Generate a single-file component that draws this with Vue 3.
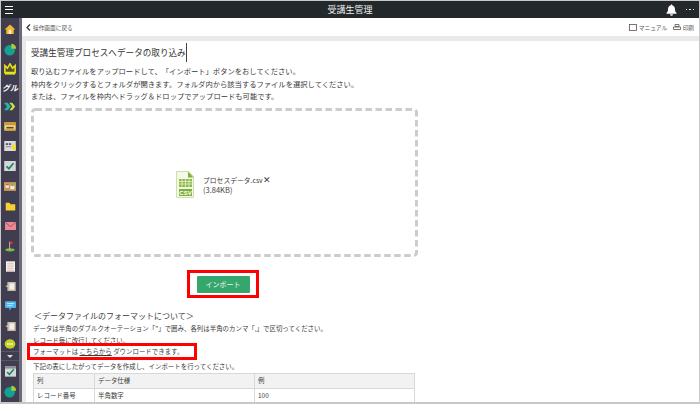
<script setup>
const lines = [
  '取り込むファイルをアップロードして、「インポート」ボタンをおしてください。',
  '枠内をクリックするとフォルダが開きます。フォルダ内から該当するファイルを選択してください。',
  'または、ファイルを枠内へドラッグ＆ドロップでアップロードも可能です。'
]
const rows = [
  { col: '列', spec: 'データ仕様', ex: '例', head: true },
  { col: 'レコード番号', spec: '半角数字', ex: '100', head: false }
]
</script>

<template>
  <div class="screen">
    <header class="topbar">
      <div class="burger"><i></i><i></i><i></i></div>
      <div class="app-title">受講生管理</div>
      <div class="top-actions">
        <svg width="11" height="12" viewBox="0 0 11 12"><path d="M5.5 0.5c.7 0 1 .5 1 1C8.300 2 9 3.500 9 5.500c0 1.500.5 2.500 1.500 3.500v.8H.5V9C1.500 8 2 7 2 5.500 2 3.500 2.700 2 4.500 1.500c0-.5.3-1 1-1z" fill="#fff"/><path d="M4 10.300h3a1.500 1.500 0 0 1-3 0z" fill="#fff"/></svg>
        <span class="dots"><i></i><i></i><i></i></span>
      </div>
    </header>

    <div class="body">
      <nav class="sidebar">
        <div class="slot"><svg width="12" height="10" viewBox="0 0 14 12"><path d="M7 .5L.5 6.500h2V12h9V6.500h2z" fill="#f2b632"/><path d="M5.500 7h3v5h-3z" fill="#fff3c4"/></svg></div>
        <div class="slot"><svg width="13" height="13" viewBox="0 0 16 16"><circle cx="7" cy="9" r="6.500" fill="#12a192"/><path d="M9 1a6 6 0 0 1 6 6H9z" fill="#a9cb3a"/></svg></div>
        <div class="slot"><svg width="12" height="12" viewBox="0 0 14 14"><path d="M1 3l3 3 3-5 3 5 3-3v8H1z" fill="#55532f" stroke="#e8e21e" stroke-width="1.800"/><path d="M1 12.500h12" stroke="#e8e21e" stroke-width="2"/></svg></div>
        <div class="slot gl-slot"><span class="gl">グル</span></div>
        <div class="slot"><svg width="12" height="9" viewBox="0 0 16 10"><path d="M0 0h5l4 5-4 5H0l4-5z" fill="#25b6a6"/><path d="M7 0h4l4 5-4 5H7l4-5z" fill="#c8e04a"/></svg></div>
        <div class="slot"><svg width="12" height="9" viewBox="0 0 15 11"><rect width="15" height="11" rx="1" fill="#c79a3b"/><rect y="4" x="1" width="13" height="5" fill="#f2d98a"/><rect x="3" y="6" width="9" height="2" fill="#5b4a2a"/></svg></div>
        <div class="slot"><svg width="12" height="10" viewBox="0 0 15 13"><rect width="15" height="13" fill="#d9d9e0"/><rect x="2" y="3" width="3" height="2" fill="#444"/><rect x="6" y="3" width="3" height="2" fill="#444"/><rect x="2" y="7" width="7" height="1" fill="#777"/><rect x="10" y="5" width="5" height="6" fill="#f4e21e"/></svg></div>
        <div class="slot"><svg width="12" height="10" viewBox="0 0 15 13"><rect width="15" height="13" fill="#d5d6dc"/><path d="M3 7l3 3 6-7" fill="none" stroke="#128a4a" stroke-width="2.200"/></svg></div>
        <div class="slot"><svg width="12" height="9" viewBox="0 0 15 11"><rect width="15" height="11" fill="#c49a5c"/><rect x="2" y="2" width="4" height="5" fill="#f3eee4"/><rect x="2" y="2" width="4" height="2" fill="#d9534f"/><rect x="8" y="4" width="5" height="5" fill="#f3eee4"/><rect x="9" y="3" width="3" height="2" fill="#5cb85c"/></svg></div>
        <div class="slot"><svg width="11" height="9" viewBox="0 0 15 12"><path d="M1 1h5l1.500 2H14v8.500H1z" fill="#f5d230"/></svg></div>
        <div class="slot"><svg width="11" height="8" viewBox="0 0 15 11"><rect width="15" height="11" fill="#e98b95"/><path d="M.5.500l7 6 7-6" fill="none" stroke="#8e3d4d" stroke-width="1"/></svg></div>
        <div class="slot"><svg width="10" height="12" viewBox="0 0 13 15"><ellipse cx="6.500" cy="12.500" rx="6" ry="2" fill="#7eb84a"/><path d="M6 2v10" stroke="#d8d8d8" stroke-width="1"/><path d="M6.500 1l5 2.500-5 2.500z" fill="#ee2b24"/></svg></div>
        <div class="slot"><svg width="9" height="11" viewBox="0 0 13 15"><rect width="13" height="15" fill="#f4f1ec"/><path d="M2 3h9M2 5.500h9M2 8h9M2 10.500h9M2 13h9" stroke="#d9a08f" stroke-width=".8"/></svg></div>
        <div class="slot"><svg width="11" height="9" viewBox="0 0 15 13"><rect x="3" width="12" height="13" fill="#c8bda2"/><rect x="6" y="2" width="7" height="9" fill="#efefef"/><path d="M0 6l4-2v4z" fill="#c8bda2"/></svg></div>
        <div class="slot"><svg width="11" height="10" viewBox="0 0 16 14"><path d="M1.500 0h13A1.500 1.500 0 0 1 16 1.500v7A1.500 1.500 0 0 1 14.500 10H9l-2 4-1-4H1.500A1.500 1.500 0 0 1 0 8.500v-7A1.500 1.500 0 0 1 1.500 0z" fill="#4cb4ee"/><path d="M3 3.500h10M3 6.500h8" stroke="#fff" stroke-width="1"/></svg></div>
        <div class="slot"><svg width="11" height="9" viewBox="0 0 15 13"><rect x="3" width="12" height="13" fill="#c8bda2"/><rect x="6" y="2" width="7" height="9" fill="#efefef"/><path d="M0 6l4-2v4z" fill="#c8bda2"/></svg></div>
        <div class="slot short"><svg width="12" height="10" viewBox="0 0 16 14"><ellipse cx="8" cy="7" rx="7.500" ry="6.500" fill="#c5d21f"/><path d="M4 7h8" stroke="#fff" stroke-width="2" stroke-dasharray="2 1"/></svg></div>
        <div class="more"><i></i></div>
        <div class="slot"><svg width="11" height="11" viewBox="0 0 15 14"><rect width="15" height="14" fill="#d5d6dc"/><rect width="15" height="3" fill="#8c8c96"/><path d="M3 8l3 3 6-7" fill="none" stroke="#128a4a" stroke-width="2.200"/></svg></div>
        <div class="slot"><svg width="13" height="13" viewBox="0 0 16 16"><circle cx="7" cy="9" r="6.500" fill="#12a192"/><path d="M9 1a6 6 0 0 1 6 6H9z" fill="#a9cb3a"/></svg></div>
      </nav>

      <main class="main">
        <div class="subbar">
          <a class="back"><svg width="5" height="7" viewBox="0 0 5 7"><path d="M4 .5L1 3.500 4 6.500" fill="none" stroke="#333" stroke-width="1.200"/></svg>操作画面に戻る</a>
          <div class="tools">
            <span class="tool"><svg width="8" height="7" viewBox="0 0 8 7"><rect x=".5" y=".5" width="7" height="6" fill="none" stroke="#555" stroke-width=".8"/></svg>マニュアル</span>
            <span class="tool"><svg width="8" height="7" viewBox="0 0 8 7"><path d="M2 .5h4v2H2zM.5 3h7v2.500h-7z" fill="none" stroke="#555" stroke-width=".8"/></svg>印刷</span>
          </div>
        </div>

        <section class="page">
          <div class="title-row"><h1 class="title">受講生管理プロセスへデータの取り込み</h1><span class="caret"></span></div>
          <p v-for="l in lines" :key="l" class="intro">{{ l }}</p>

          <div class="drop">
            <svg class="dash" width="387" height="149" viewBox="0 0 387 149"><rect x="1.500" y="1.500" width="384" height="146" rx="3" fill="none" stroke="#cccccc" stroke-width="3" stroke-dasharray="6.500 3.500"/></svg>
            <svg width="18" height="27" viewBox="0 0 18 27"><path d="M.5.500h12l5 5v21H.5z" fill="#f4f8e8" stroke="#cfe0a0" stroke-width="1"/><path d="M12 .5l5.500 6H12z" fill="#7fb03a"/><rect x="3" y="8" width="13" height="8" fill="#8dba46"/><path d="M3 10.500h13M3 13h13M6 8v8M9.500 8v8M13 8v8" stroke="#f4f8e8" stroke-width=".7"/><rect x="3" y="18" width="13" height="7" fill="#7fb03a"/><text x="9.500" y="24" font-size="6" font-weight="700" text-anchor="middle" fill="#fff" font-family="Liberation Sans, sans-serif">CSV</text></svg>
            <div class="file">
              <div class="fname">プロセスデータ.csv<span class="x">✕</span></div>
              <div class="fsize">(3.84KB)</div>
            </div>
          </div>

          <div class="action">
            <div class="hl-btn"><button class="import" type="button">インポート</button></div>
          </div>

          <h2 class="fmt-head">＜データファイルのフォーマットについて＞</h2>
          <p class="note">データは半角のダブルクオーテーション「"」で囲み、各列は半角のカンマ「,」で区切ってください。</p>
          <p class="note">レコード毎に改行してください。</p>
          <p class="note dl">フォーマットは <u>こちらから</u> ダウンロードできます。<span class="hl-line"></span></p>
          <p class="note last">下記の表にしたがってデータを作成し、インポートを行ってください。</p>

          <table class="spec">
            <tbody>
              <tr v-for="r in rows" :key="r.col" :class="{ head: r.head }">
                <td class="c1">{{ r.col }}</td>
                <td class="c2">{{ r.spec }}</td>
                <td class="c3">{{ r.ex }}</td>
              </tr>
            </tbody>
          </table>
        </section>
      </main>
    </div>
  </div>
</template>

<style>
html, body { margin: 0; background: #fff; }
</style>

<style scoped>
.screen {
  width: 700px; height: 404px; box-sizing: border-box; overflow: hidden;
  display: flex; flex-direction: column;
  border: 1px solid #c8c8c8; border-width: 1px 1px 2px 1px;
  font-family: "Noto Sans CJK JP", "Liberation Sans", sans-serif; color: #3a3a3a; background: #fff;
  text-spacing-trim: space-all;
}
.topbar {
  height: 17px; flex: none; background: #23282a; display: flex; align-items: center; position: relative;
}
.burger { width: 8px; margin-left: 4px; display: flex; flex-direction: column; gap: 2.500px; }
.burger i { display: block; height: 1px; background: #fff; }
.app-title { position: absolute; left: 0; right: 0; text-align: center; color: #eee; font-size: 9px; }
.top-actions { margin-left: auto; margin-right: 5px; display: flex; align-items: center; gap: 9px; position: relative; }
.dots { display: flex; gap: 2px; }
.dots i { width: 1.500px; height: 1.500px; background: #eee; display: block; }
.body { flex: 1; min-height: 0; display: flex; }
.sidebar {
  width: 18px; flex: none; background: #413d50; border-right: 3px solid #6c6978;
  display: flex; flex-direction: column; align-items: center; padding-top: 1px;
}
.slot { height: 20px; width: 100%; flex: none; display: flex; align-items: center; justify-content: center; }
.gl-slot { height: 17px; }
.short { height: 15px; }
.gl { color: #fff; font-size: 8px; font-weight: 700; font-style: italic; white-space: nowrap; line-height: 12px; }
.more { height: 10px; width: 100%; flex: none; box-sizing: border-box; border-top: 1px solid #57536a; border-bottom: 1px solid #57536a; display: flex; align-items: center; justify-content: center; }
.more i { display: block; width: 0; height: 0; border: 3px solid transparent; border-top: 3px solid #ddd; border-bottom: 0; }
.main { flex: 1; min-width: 0; display: flex; flex-direction: column; background: #e9e9e9; }
.subbar {
  height: 18px; flex: none; background: #fff; display: flex; align-items: center; justify-content: space-between;
  padding: 0 5px 0 4px; font-size: 5.700px; color: #555;
}
.back { display: flex; align-items: center; gap: 2px; }
.tools { display: flex; gap: 6px; }
.tool { display: flex; align-items: center; gap: 1.500px; }
.page {
  flex: 1; min-height: 0; margin: 5px 0 0 4px; background: #fff; padding: 0 0 0 5px; overflow: hidden;
}
.title-row { height: 24px; display: flex; align-items: flex-start; padding-top: 2px; box-sizing: border-box; }
.title { margin: 0; font-size: 8.600px; font-weight: 400; color: #333; line-height: 19px; }
.caret { width: 1px; height: 19px; background: #444; }
.intro { margin: 0; font-size: 7.300px; line-height: 12.500px; white-space: nowrap; }
.drop {
  position: relative; width: 387px; height: 149px; margin-top: 5.500px; box-sizing: border-box;
  display: flex; align-items: center; padding-left: 145px; gap: 9px; padding-top: 4px;
}
.dash { position: absolute; left: 0; top: 0; }
.fname { font-size: 6.800px; line-height: 10px; }
.x { font-size: 9px; }
.fsize { font-size: 7.500px; line-height: 10px; color: #444; }
.action { width: 384px; display: flex; justify-content: center; margin-top: 13px; height: 28px; }
.hl-btn {
  border: 3px solid #f00; width: 72px; height: 28px; box-sizing: border-box;
  display: flex; align-items: center; justify-content: center;
}
.import {
  width: 53px; height: 17px; background: #35a76c; color: #f4f4f4; border: 0; border-radius: 1px; padding: 0;
  font: 7px "Noto Sans CJK JP", sans-serif;
}
.fmt-head { margin: 11px 0 0 3px; font-size: 8px; font-weight: 400; line-height: 14px; white-space: nowrap; }
.note { margin: 0 0 0 2px; font-size: 6.450px; line-height: 11.500px; white-space: nowrap; }
.dl { position: relative; }
.hl-line {
  position: absolute; left: -6px; top: -3px; width: 170px; height: 16.500px; border: 3px solid #f00; box-sizing: border-box; pointer-events: none;
}
.last { margin-top: 3.500px; }
.spec { border-collapse: collapse; margin: 0 0 0 2px; width: 382px; table-layout: fixed; }
.spec td { border: 1px solid #d8d8d8; padding: 0 3px; height: 14px; font-size: 6.450px; line-height: 11px; }
.head td { background: #f2f2f2; }
.c1 { width: 54px; }
.c2 { width: 153px; }
</style>
